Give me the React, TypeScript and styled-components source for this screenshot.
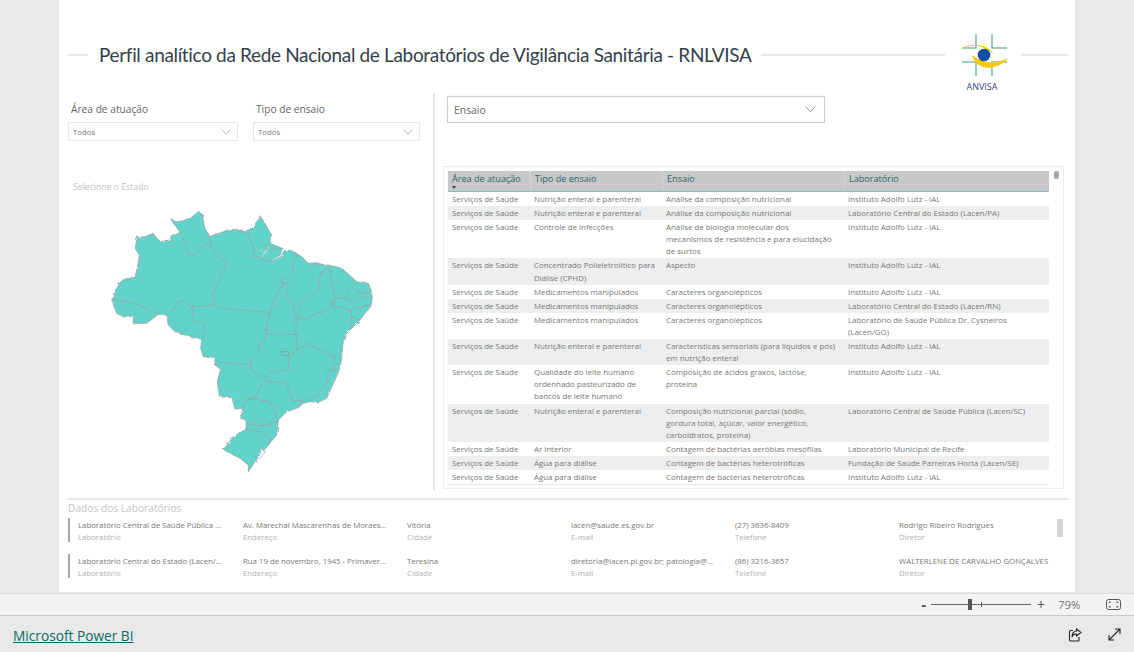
import React from "react";
import styled, { createGlobalStyle } from "styled-components";

const Global = createGlobalStyle`
  html, body { margin: 0; padding: 0; background: #e9e9e9; }
  body { font-family: "Open Sans", "Liberation Sans", sans-serif; overflow: hidden; }
`;

const Page = styled.div`
  width: 1134px; height: 652px; display: grid; grid-template-rows: 593px 23px 36px; background: #e9e9e9;
`;
const Stage = styled.div`display: flex; justify-content: center; overflow: hidden;`;
const Canvas = styled.main`
  width: 1016px; height: 592px; background: #fff; padding: 0 7px 0 9px; box-sizing: border-box;
  display: flex; flex-direction: column;
`;
const Header = styled.header`
  height: 93px; box-sizing: border-box; padding-top: 16px; display: flex; align-items: center;
`;
const Rule = styled.span<{ $w?: number }>`
  height: 2px; background: #e8e8e8; display: block;
  ${(p) => (p.$w ? `width:${p.$w}px;` : "flex:1;")}
`;
const Title = styled.h1`
  margin: 0 9px 0 11px; font-family: Lato, "Open Sans", sans-serif; font-size: 19px; font-weight: 400; color: #33414a;
  white-space: nowrap; letter-spacing: -0.34px;
`;
const LogoBlock = styled.div`
  width: 76px; display: flex; flex-direction: column; align-items: center; margin-top: 16px;
`;
const LogoName = styled.span`
  font-size: 9px; color: #3b3f8c; line-height: 12px; margin-top: 3px; margin-left: -2px;
`;
const Body = styled.section`display: flex; height: 397px;`;
const LeftCol = styled.div`width: 365px; flex: none; padding-top: 9px; box-sizing: border-box;`;
const Divider = styled.div`width: 2px; background: #e6e6e6; flex: none;`;
const RightCol = styled.div`flex: 1; padding: 3px 4px 0 8px; min-width: 0;`;
const Slicers = styled.div`display: flex; gap: 15px;`;
const Slicer = styled.div<{ $w: number }>`width: ${(p) => p.$w}px;`;
const SlicerLabel = styled.div`
  font-size: 10.2px; line-height: 14px; color: #666; margin: 0 0 6px 3px;
`;
const Select = styled.div`
  height: 19px; border: 1px solid #e8e8e8; box-sizing: border-box; display: flex; align-items: center;
  justify-content: space-between; padding: 0 6px 0 4px; font-size: 7.8px; color: #777;
`;
const StateHint = styled.div`
  font-size: 8.7px; line-height: 12px; color: #c4c4c4; margin: 40px 0 0 5px;
`;
const MapSvg = styled.svg`display: block; margin: 7px 0 0 32px; width: 300px; height: 290px;`;
const BigSelect = styled.div`
  width: 378px; height: 27px; margin-left: 4px; box-sizing: border-box; border: 1px solid #cfcfcf;
  box-shadow: 0 0 2px rgba(0,0,0,.08);
  display: flex; align-items: center; justify-content: space-between; padding: 0 8px 0 6px;
  font-size: 10.4px; color: #666;
`;
const TableFrame = styled.div`
  position: relative; margin-top: 43px; height: 323px; box-sizing: border-box; border: 1px solid #ededed;
  padding: 4px 0 0 4px; overflow: hidden;
`;
const Thumb = styled.div`
  position: absolute; top: 4px; right: 4px; width: 5px; height: 8px; border-radius: 2px; background: #a8a8a8;
`;
const HeadRow = styled.div`
  display: grid; grid-template-columns: 82px 132px 182px 205px; height: 21px; box-sizing: border-box;
  background: #c8c8c8; border-bottom: 1px solid #6cc9c3; width: 601px;
`;
const HeadCell = styled.div`
  position: relative; padding-left: 4px; font-size: 9.1px; line-height: 16px; color: #2a6662; white-space: nowrap;
  border-left: 1px solid #d4d4d4; &:first-child { border-left: 0; }
`;
const SortCaret = styled.span`
  position: absolute; left: 4px; top: 15px; border: 2.5px solid transparent; border-top: 3px solid #1f4d5a; border-bottom: 0;
`;
const Row = styled.div<{ $alt: boolean }>`
  display: grid; grid-template-columns: 82px 132px 182px 205px; width: 601px; padding: 1px 0;
  background: ${(p) => (p.$alt ? "#eeeeee" : "#fff")};
`;
const Cell = styled.div`
  padding-left: 4px; font-size: 7.9px; line-height: 12.1px; color: #777; white-space: pre-line;
`;
const Closing = styled.div`width: 601px; height: 1px; background: #e4e4e4;`;
const BottomRule = styled.div`height: 2px; background: #e8e8e8; margin-top: 8px;`;
const Cards = styled.section`position: relative; flex: 1;`;
const CardsTitle = styled.div`font-size: 10.2px; line-height: 14px; color: #c4c4c4; margin-top: 1px; height: 17px;`;
const Card = styled.div`
  display: grid; grid-template-columns: 165px 164px 164px 164px 164px 160px; height: 24px; border-left: 2px solid #a8a8a8;
  padding-left: 8px; margin-bottom: 12px; width: 981px;
`;
const Field = styled.div`display: flex; flex-direction: column; padding-top: 1px;`;
const FieldValue = styled.span`font-size: 7.8px; line-height: 12px; color: #777; white-space: nowrap;`;
const FieldLabel = styled.span`font-size: 7.8px; line-height: 12px; color: #b0b0b0;`;
const CardThumb = styled.div`position: absolute; right: 5px; top: 19px; width: 6px; height: 18px; background: #d6d6d6;`;
const ZoomBar = styled.div`
  background: #f3f3f3; border-top: 1px solid #dcdcdc; border-bottom: 1px solid #c8c8c8; box-sizing: border-box;
  display: flex; align-items: center; justify-content: flex-end; padding-right: 13px; color: #666;
`;
const ZoomSign = styled.span`font-size: 14px; width: 10px; text-align: center; color: #555;`;
const ZoomMinus = styled(ZoomSign)`text-align: right; font-weight: 700; color: #444;`;
const Track = styled.div`position: relative; width: 100px; height: 1px; background: #666; margin: 0 5px;`;
const Knob = styled.span`position: absolute; left: 37px; top: -5px; width: 4px; height: 11px; background: #555;`;
const Tick = styled.span`position: absolute; left: 50px; top: -2px; width: 1px; height: 5px; background: #555;`;
const Pct = styled.span`font-size: 11.4px; margin: 0 25px 0 12px; width: 23px; color: #777;`;
const BottomBar = styled.footer`
  display: flex; align-items: center; justify-content: space-between; padding: 0 13px; background: #e9e9e9;
`;
const PbiLink = styled.a`
  font-size: 13.7px; margin-top: 3px; color: #0a6b66; text-decoration: underline;
`;
const Actions = styled.div`display: flex; gap: 26px; align-items: center; margin-top: 1px;`;

const Chevron = ({ size = 10, color = "#aaa" }: { size?: number; color?: string }) => (
  <svg width={size} height={size * 0.6} viewBox="0 0 10 6" fill="none">
    <path d="M.5.5 5 5.2 9.5.5" stroke={color} strokeWidth="0.8" />
  </svg>
);

const rows = [
  ["Nutrição enteral e parenteral", "Análise da composição nutricional", "Instituto Adolfo Lutz - IAL"],
  ["Nutrição enteral e parenteral", "Análise da composição nutricional", "Laboratório Central do Estado (Lacen/PA)"],
  ["Controle de infecções", "Análise de biologia molecular dos\nmecanismos de resistência e para elucidação\nde surtos", "Instituto Adolfo Lutz - IAL"],
  ["Concentrado Polieletrolítico para\nDiálise (CPHD)", "Aspecto", "Instituto Adolfo Lutz - IAL"],
  ["Medicamentos manipulados", "Caracteres organolépticos", "Instituto Adolfo Lutz - IAL"],
  ["Medicamentos manipulados", "Caracteres organolépticos", "Laboratório Central do Estado (Lacen/RN)"],
  ["Medicamentos manipulados", "Caracteres organolépticos", "Laboratório de Saúde Pública Dr. Cysneiros\n(Lacen/GO)"],
  ["Nutrição enteral e parenteral", "Características sensoriais (para líquidos e pós)\nem nutrição enteral", "Instituto Adolfo Lutz - IAL"],
  ["Qualidade do leite humano\nordenhado pasteurizado de\nbancos de leite humano", "Composição de ácidos graxos, lactose,\nproteína", "Instituto Adolfo Lutz - IAL"],
  ["Nutrição enteral e parenteral", "Composição nutricional parcial (sódio,\ngordura total, açúcar, valor energético,\ncarboidratos, proteína)", "Laboratório Central de Saúde Pública (Lacen/SC)"],
  ["Ar interior", "Contagem de bactérias aeróbias mesófilas", "Laboratório Municipal de Recife"],
  ["Água para diálise", "Contagem de bactérias heterotróficas", "Fundação de Saúde Parreiras Horta (Lacen/SE)"],
  ["Água para diálise", "Contagem de bactérias heterotróficas", "Instituto Adolfo Lutz - IAL"],
];

const labs = [
  ["Laboratório Central de Saúde Pública ...", "Av. Marechal Mascarenhas de Moraes...", "Vitória", "lacen@saude.es.gov.br", "(27) 3636-8409", "Rodrigo Ribeiro Rodrigues"],
  ["Laboratório Central do Estado (Lacen/...", "Rua 19 de novembro, 1945 - Primaver...", "Teresina", "diretoria@lacen.pi.gov.br; patologia@...", "(86) 3216-3657", "WALTERLENE DE CARVALHO GONÇALVES"],
];
const labLabels = ["Laboratório", "Endereço", "Cidade", "E-mail", "Telefone", "Diretor"];

const outline =
  "35,300 42,290 48,270 60,248 72,238 105,232 112,200 118,165 107,148 107,135 112,112 135,110 160,100 168,112 182,125 205,120 225,105 240,97 228,80 212,57 232,65 250,62 275,52 295,35 310,45 308,62 316,85 330,110 345,103 362,98 390,88 415,90 440,92 458,85 470,65 482,50 495,70 505,90 515,105 505,125 520,135 548,145 540,165 525,183 540,175 552,152 570,150 590,160 605,170 625,190 650,188 680,197 700,198 725,205 745,222 770,245 805,250 815,275 817,295 812,320 795,340 780,360 765,375 750,390 735,405 730,420 725,470 720,505 705,540 700,550 680,595 655,607 630,605 610,610 590,625 560,635 535,660 530,705 505,735 480,765 465,785 445,815 445,795 420,775 400,765 370,748 385,730 400,710 438,688 438,660 422,655 428,625 405,627 395,590 358,588 352,545 362,508 345,495 345,472 310,470 302,445 305,418 270,410 225,395 205,375 200,345 175,343 140,370 100,370 100,345 70,350 50,340";

const borders = [
  "330,110 335,145 360,175 382,185 360,235 340,280 345,315",
  "240,97 255,125 265,165 280,165 300,150 315,135 330,130",
  "35,297 105,310 175,343",
  "200,345 215,335 235,305 250,303 275,320 345,315",
  "275,320 280,362 312,370 315,395 305,418",
  "345,315 370,325 510,337",
  "510,337 500,380 498,400 478,445 450,490",
  "345,495 370,490 390,488 420,495 435,490 450,490 455,510 490,535",
  "490,535 510,517 565,510 567,470 590,450 590,405",
  "498,400 530,405 580,403 590,405 585,380 595,350",
  "590,450 625,432 650,445 680,460 707,470 695,510 680,520 685,545 665,565 655,585 640,590 610,600 580,605 565,570 560,545 530,548 495,540",
  "695,510 715,512",
  "495,540 465,590 440,600 428,625",
  "440,600 465,597 510,605 525,640 535,660",
  "610,600 595,625",
  "438,670 480,678 535,665",
  "438,688 480,695 510,715 505,735",
  "510,337 525,290 550,250 540,245 570,225 590,165",
  "545,248 565,250 560,290 580,310 585,350 595,350",
  "625,205 655,190",
  "680,200 660,230 655,270 625,290 600,310 595,350 610,360 640,345 690,325 705,295",
  "690,200 695,250 705,295 740,295 745,275 770,245",
  "765,270 790,280 815,275",
  "740,295 760,305 785,290 815,295",
  "705,295 700,325 720,320 750,330 790,320 812,315",
  "750,330 755,350 780,360",
  "755,350 750,385",
  "415,90 445,105 465,160 458,168 480,170",
  "480,160 500,135 515,125",
  "495,145 540,148",
  "480,175 498,185 525,175",
];

export default function App() {
  return (
    <Page>
      <Global />
      <Stage>
        <Canvas>
          <Header>
            <Rule $w={20} />
            <Title>Perfil analítico da Rede Nacional de Laboratórios de Vigilância Sanitária - RNLVISA</Title>
            <Rule />
            <LogoBlock>
              <svg width="55" height="46" viewBox="955 32 55 46" fill="none">
                <path d="M975 34V48H961M991 34V48H1006M961 62H975V76M1006 62H991V76" stroke="#3fa873" strokeWidth="1.1" />
                <path d="M957 52C962 43 984 41 993 54 986 50 980 45 972 46 965 46 960 48 957 52Z" fill="#f7c90c" />
                <path d="M971 55C978 60 990 67 1007 58 1004 64 990 70 982 67 976 65 972 60 971 55Z" fill="#f7c90c" />
                <circle cx="983" cy="55" r="6.3" fill="#0d4fa3" />
              </svg>
              <LogoName>ANVISA</LogoName>
            </LogoBlock>
            <Rule $w={47} />
          </Header>
          <Body>
            <LeftCol>
              <Slicers>
                <Slicer $w={170}>
                  <SlicerLabel>Área de atuação</SlicerLabel>
                  <Select>Todos<Chevron /></Select>
                </Slicer>
                <Slicer $w={167}>
                  <SlicerLabel>Tipo de ensaio</SlicerLabel>
                  <Select>Todos<Chevron /></Select>
                </Slicer>
              </Slicers>
              <StateHint>Selecione o Estado</StateHint>
              <MapSvg viewBox="0 0 900 870">
                <defs>
                  <filter id="rough" x="-5%" y="-5%" width="110%" height="110%">
                    <feTurbulence type="fractalNoise" baseFrequency="0.07" numOctaves="2" seed="4" />
                    <feDisplacementMap in="SourceGraphic" scale="9" />
                  </filter>
                </defs>
                <g filter="url(#rough)">
                  <polygon points={outline} fill="#62d3cb" stroke="#9aa5a5" strokeWidth="2.4" strokeLinejoin="round" />
                  {borders.map((b, i) => (
                    <polyline key={i} points={b} fill="none" stroke="#98a3a3" strokeWidth="2.4" strokeLinejoin="round" />
                  ))}
                  <polygon points="480,745 497,755 478,778 468,785 482,760" fill="#fff" stroke="#9aa5a5" strokeWidth="2" />
                  <path d="M480 150 495 160 505 140M485 172 500 150M520 180 545 165" stroke="#dfe7e7" strokeWidth="2" fill="none" />
                </g>
                <rect x="545" y="455" width="20" height="12" fill="#62d3cb" stroke="#8c9898" strokeWidth="2.4" />
              </MapSvg>
            </LeftCol>
            <Divider />
            <RightCol>
              <BigSelect>Ensaio<Chevron size={11} color="#888" /></BigSelect>
              <TableFrame>
                <HeadRow>
                  <HeadCell>Área de atuação<SortCaret /></HeadCell>
                  <HeadCell>Tipo de ensaio</HeadCell>
                  <HeadCell>Ensaio</HeadCell>
                  <HeadCell>Laboratório</HeadCell>
                </HeadRow>
                {rows.map((r, i) => (
                  <Row key={i} $alt={i % 2 === 1}>
                    <Cell>Serviços de Saúde</Cell>
                    <Cell>{r[0]}</Cell>
                    <Cell>{r[1]}</Cell>
                    <Cell>{r[2]}</Cell>
                  </Row>
                ))}
                <Closing />
                <Thumb />
              </TableFrame>
            </RightCol>
          </Body>
          <BottomRule />
          <Cards>
            <CardsTitle>Dados dos Laboratórios</CardsTitle>
            {labs.map((lab, i) => (
              <Card key={i}>
                {lab.map((v, j) => (
                  <Field key={j}>
                    <FieldValue>{v}</FieldValue>
                    <FieldLabel>{labLabels[j]}</FieldLabel>
                  </Field>
                ))}
              </Card>
            ))}
            <CardThumb />
          </Cards>
        </Canvas>
      </Stage>
      <ZoomBar>
        <ZoomMinus>-</ZoomMinus>
        <Track><Knob /><Tick /></Track>
        <ZoomSign>+</ZoomSign>
        <Pct>79%</Pct>
        <svg width="15" height="11" viewBox="0 0 15 11" fill="none" stroke="#555" strokeWidth="1">
          <rect x=".5" y=".5" width="14" height="10" rx="2" />
          <path d="M3 4V3H5M10 3H12V4M3 7V8H5M10 8H12V7" />
        </svg>
      </ZoomBar>
      <BottomBar>
        <PbiLink href="#">Microsoft Power BI</PbiLink>
        <Actions>
          <svg width="14" height="14" viewBox="0 0 14 14" fill="none" stroke="#222" strokeWidth="1.1">
            <path d="M5 2.5H2.5A1 1 0 0 0 1.5 3.5V12A1 1 0 0 0 2.5 13H10A1 1 0 0 0 11 12V9" />
            <path d="M8.5 1 13 4.5 8.5 8V6C6 6 4.5 7 4 9 4 6 5.5 3.5 8.5 3Z" />
          </svg>
          <svg width="13" height="13" viewBox="0 0 13 13" fill="none" stroke="#222" strokeWidth="1.1">
            <path d="M1 12 12 1M7 1H12V6M1 7V12H6" />
          </svg>
        </Actions>
      </BottomBar>
    </Page>
  );
}
